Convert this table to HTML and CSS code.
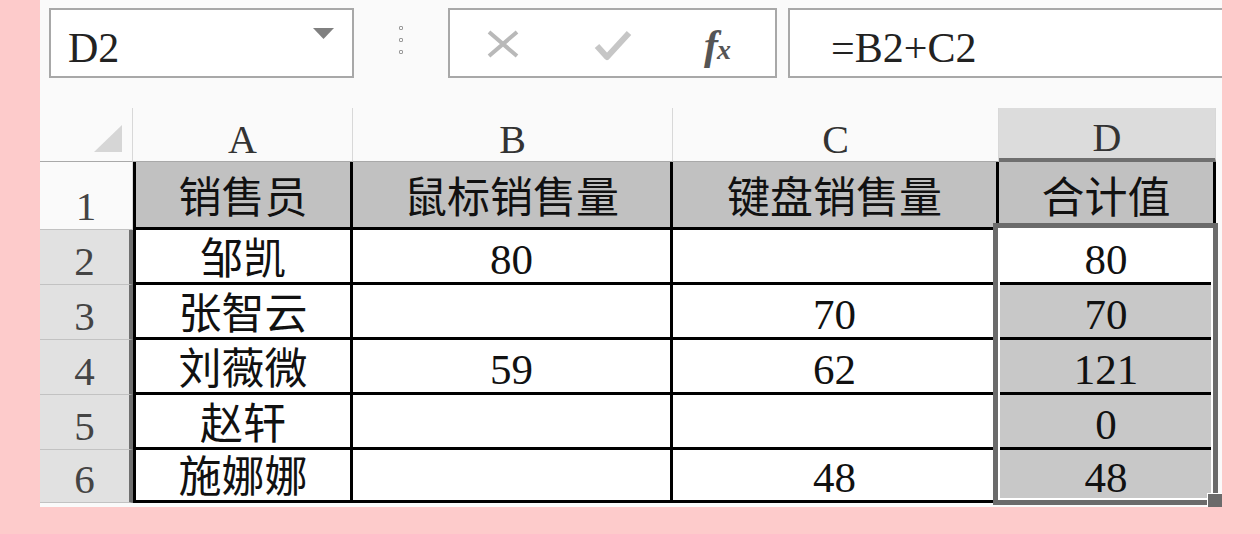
FILE: index.html
```html
<!DOCTYPE html>
<html lang="zh-CN">
<head>
<meta charset="utf-8">
<title>合计值</title>
<link rel="stylesheet" href="styles.css">
</head>
<body>
<div class="sheet">
  <div class="fbar">
    <div class="namebox">
      <span class="nb-text">D2</span>
      <svg class="nb-arrow" width="21" height="11" viewBox="0 0 21 11"><polygon points="0,0 21,0 10.5,11" fill="#808080"/></svg>
    </div>
    <div class="grip"><i></i><i></i><i></i></div>
    <div class="fbtns">
      <svg class="ic-x" width="32" height="28" viewBox="0 0 32 28"><path d="M2 2 L30 26 M30 2 L2 26" stroke="#b9b9b9" stroke-width="4" fill="none"/></svg>
      <svg class="ic-ok" width="38" height="32" viewBox="0 0 38 32"><polyline points="3,17 13,28 35,4" stroke="#c6c6c6" stroke-width="6" fill="none" stroke-linejoin="round"/></svg>
      <span class="fx"><span class="fx-f">f</span><span class="fx-x">x</span></span>
    </div>
    <div class="finput">=B2+C2</div>
  </div>

  <div class="grid">
    <div class="ch corner"><span class="tri"></span></div>
    <div class="ch">A</div>
    <div class="ch">B</div>
    <div class="ch">C</div>
    <div class="ch ch-sel">D</div>
    <div class="ch ch-end"></div>

    <div class="rh rh1">1</div>
    <div class="c hdr first">销售员</div>
    <div class="c hdr">鼠标销售量</div>
    <div class="c hdr">键盘销售量</div>
    <div class="c hdr">合计值</div>
    <div class="tail"></div>

    <div class="rh rs">2</div>
    <div class="c first">邹凯</div>
    <div class="c">80</div>
    <div class="c"></div>
    <div class="c">80</div>
    <div class="tail"></div>

    <div class="rh rs">3</div>
    <div class="c first">张智云</div>
    <div class="c"></div>
    <div class="c">70</div>
    <div class="c shade">70</div>
    <div class="tail"></div>

    <div class="rh rs">4</div>
    <div class="c first">刘薇微</div>
    <div class="c">59</div>
    <div class="c">62</div>
    <div class="c shade">121</div>
    <div class="tail"></div>

    <div class="rh rs">5</div>
    <div class="c first">赵轩</div>
    <div class="c"></div>
    <div class="c"></div>
    <div class="c shade">0</div>
    <div class="tail"></div>

    <div class="rh rs">6</div>
    <div class="c first">施娜娜</div>
    <div class="c"></div>
    <div class="c">48</div>
    <div class="c shade">48</div>
    <div class="tail"></div>
  </div>

  <div class="selection"></div>
  <div class="handle"></div>
</div>
</body>
</html>
```

FILE: styles.css
```css
* { box-sizing: border-box; }
html, body { margin: 0; padding: 0; }
body {
  background: #fdcbcb;
  width: 1260px;
  height: 534px;
  overflow: hidden;
}
.sheet {
  position: relative;
  margin-left: 40px;
  width: 1182px;
  height: 507px;
  background: #fafafa;
  overflow: hidden;
}

/* formula bar */
.fbar {
  display: flex;
  align-items: stretch;
  height: 78px;
  padding-top: 8px;
}
.fbar > * { flex: none; }
.namebox {
  margin-left: 9px;
  width: 305px;
  background: #fff;
  border: 2px solid #a8a8a8;
  display: flex;
  align-items: flex-end;
  justify-content: space-between;
  padding: 0 18px 7px 17px;
}
.nb-text {
  font: 42px/42px "Liberation Serif", serif;
  color: #222;
}
.nb-arrow { align-self: center; margin-top: -12px; }
.grip {
  width: 94px;
  display: flex;
  flex-direction: column;
  align-items: center;
  justify-content: center;
  gap: 8px;
  padding-bottom: 6px;
}
.grip i {
  display: block;
  width: 4px;
  height: 4px;
  border: 1px solid #9a9a9a;
  border-radius: 1px;
}
.fbtns {
  width: 329px;
  background: #fff;
  border: 2px solid #a8a8a8;
  display: flex;
  align-items: center;
  padding-left: 37px;
}
.ic-x { margin-top: 2px; }
.ic-ok { margin-left: 75px; margin-top: 4px; }
.fx {
  margin-left: 72px;
  color: #555;
  font-family: "Liberation Serif", serif;
  font-style: italic;
  font-weight: bold;
  display: flex;
  align-items: baseline;
  margin-top: 4px;
}
.fx-f { font-size: 42px; line-height: 42px; }
.fx-x { font-size: 28px; line-height: 28px; margin-left: -1px; }
.finput {
  margin-left: 11px;
  width: 460px;
  background: #fff;
  border: 2px solid #a8a8a8;
  display: flex;
  align-items: flex-end;
  padding: 0 0 7px 41px;
  font: 42px/42px "Liberation Serif", serif;
  color: #222;
}

/* grid */
.grid {
  margin-top: 30px;
  display: grid;
  grid-template-columns: 93px 220px 320px 326px 217px 6px;
  grid-template-rows: 54px 68px 55px 55px 55px 55px 53px;
}
.ch {
  background: #fafafa;
  border-right: 1px solid #d8d8d8;
  border-bottom: 1px solid #a9a9a9;
  display: flex;
  justify-content: center;
  align-items: flex-end;
  padding-bottom: 1px;
  font: 40px/40px "Liberation Serif", serif;
  color: #333;
}
.ch.corner {
  justify-content: flex-end;
  padding: 0 10px 9px 0;
}
.tri {
  display: block;
  width: 28px;
  height: 27px;
  background: #d6d6d6;
  clip-path: polygon(100% 0, 100% 100%, 0 100%);
}
.ch-sel {
  background: #dcdcdc;
  border-bottom: 4px solid #6f6f6f;
  padding-bottom: 0;
}
.ch-end { border-right: none; border-bottom: none; }

.rh {
  display: flex;
  justify-content: center;
  align-items: flex-end;
  padding-bottom: 2px;
  font: 41px/41px "Liberation Serif", serif;
  color: #444;
  border-bottom: 1px solid #c2c2c2;
}
.rh1 { background: #fafafa; border-right: 1px solid #d8d8d8; }
.rs { background: #e1e1e1; border-right: 4px solid #6f6f6f; }

.c {
  background: #fff;
  border-right: 3px solid #000;
  border-bottom: 3px solid #000;
  display: flex;
  justify-content: center;
  align-items: flex-end;
  padding-bottom: 1px;
  font: 43px/43px "Liberation Serif", "Noto Sans CJK SC", serif;
  color: #111;
  white-space: nowrap;
}
.c.first { border-left: 3px solid #000; }
.c.hdr { background: #c1c1c1; padding-bottom: 7px; }
.c.shade { background: #c8c8c8; }
.tail { background: #fafafa; }

/* selection overlay */
.selection {
  position: absolute;
  left: 953px;
  top: 223px;
  width: 225px;
  height: 282px;
  border: 5px solid #6b6b6b;
  box-shadow: inset 0 0 0 2px #fff;
}
.handle {
  position: absolute;
  left: 1167px;
  top: 493px;
  width: 15px;
  height: 14px;
  background: #6b6b6b;
  border-left: 1px solid #fff;
  border-top: 1px solid #fff;
}
```
